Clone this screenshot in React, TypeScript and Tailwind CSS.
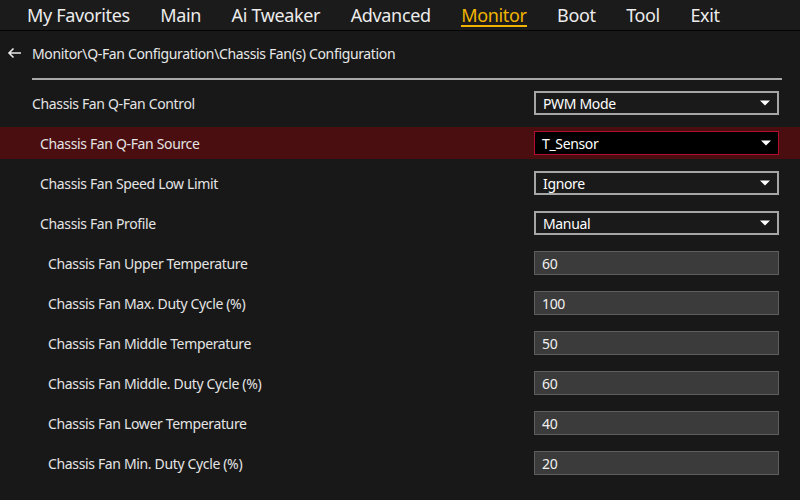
const tabs = ["My Favorites", "Main", "Ai Tweaker", "Advanced", "Monitor", "Boot", "Tool", "Exit"];

type Row = {
  label: string;
  value: string;
  kind: "select" | "input";
  indent: 0 | 1 | 2;
  active?: boolean;
};

const rows: Row[] = [
  { label: "Chassis Fan Q-Fan Control", value: "PWM Mode", kind: "select", indent: 0 },
  { label: "Chassis Fan Q-Fan Source", value: "T_Sensor", kind: "select", indent: 1, active: true },
  { label: "Chassis Fan Speed Low Limit", value: "Ignore", kind: "select", indent: 1 },
  { label: "Chassis Fan Profile", value: "Manual", kind: "select", indent: 1 },
  { label: "Chassis Fan Upper Temperature", value: "60", kind: "input", indent: 2 },
  { label: "Chassis Fan Max. Duty Cycle (%)", value: "100", kind: "input", indent: 2 },
  { label: "Chassis Fan Middle Temperature", value: "50", kind: "input", indent: 2 },
  { label: "Chassis Fan Middle. Duty Cycle (%)", value: "60", kind: "input", indent: 2 },
  { label: "Chassis Fan Lower Temperature", value: "40", kind: "input", indent: 2 },
  { label: "Chassis Fan Min. Duty Cycle (%)", value: "20", kind: "input", indent: 2 },
];

const indentClass = ["pl-[32px]", "pl-[40px]", "pl-[48px]"];

function Caret() {
  return (
    <svg width="10" height="6" viewBox="0 0 10 6" className="mr-[7px]">
      <path d="M0 0.5 H10 L5 5.5 Z" fill="#ffffff" />
    </svg>
  );
}

export default function App() {
  return (
    <div
      className="w-[800px] h-[500px] overflow-hidden bg-[#181818] text-[#e6e6e6]"
      style={{ fontFamily: '"Noto Sans", "Open Sans", sans-serif' }}
    >
      <div className="h-[31px] bg-[#1b1b1b] border-b border-[#050505] flex items-center pl-[27px] gap-[30.5px] text-[18px] tracking-[-0.35px]">
        {tabs.map((t) =>
          t === "Monitor" ? (
            <span key={t} className="relative text-[#f0b400] leading-[30px]">
              {t}
              <span className="absolute left-0 right-0 bottom-[3px] h-[2px] bg-[#f0b400]" />
            </span>
          ) : (
            <span key={t} className="text-[#ececec] leading-[30px]">
              {t}
            </span>
          )
        )}
      </div>

      <div className="h-[44px] flex items-center pl-[7px] text-[14px] tracking-[-0.35px] text-[#e8e8e8]">
        <svg width="15" height="12" viewBox="0 0 15 12" className="mr-[10px]">
          <path d="M14 6 H2 M6.5 1.5 L2 6 L6.5 10.5" stroke="#e8e8e8" strokeWidth="1.6" fill="none" />
        </svg>
        <span>Monitor\Q-Fan Configuration\Chassis Fan(s) Configuration</span>
      </div>

      <div className="ml-[32px] mr-[18px] mt-[3px] h-[2px] bg-[#a8a8a8]" />

      <div className="flex flex-col gap-[8px] mt-[7px]">
        {rows.map((r) => (
          <div
            key={r.label}
            className={`h-[32px] flex items-center justify-between pr-[21px] text-[14px] tracking-[-0.35px] ${
              indentClass[r.indent]
            } ${r.active ? "bg-[#4b0e10]" : ""}`}
          >
            <span className="text-[#e4e4e4]">{r.label}</span>
            {r.kind === "select" ? (
              <div
                className={`w-[245px] h-[24px] flex items-center justify-between pl-[7px] ${
                  r.active
                    ? "bg-black border border-[#b0102c]"
                    : "bg-[#1a1a1a] border-2 border-[#a6a6a6]"
                }`}
              >
                <span className="text-white">{r.value}</span>
                <Caret />
              </div>
            ) : (
              <div className="w-[245px] h-[24px] flex items-center pl-[7px] bg-[#3b3b3b] border border-[#5e5e5e]">
                <span className="text-[#f0f0f0]">{r.value}</span>
              </div>
            )}
          </div>
        ))}
      </div>
    </div>
  );
}
